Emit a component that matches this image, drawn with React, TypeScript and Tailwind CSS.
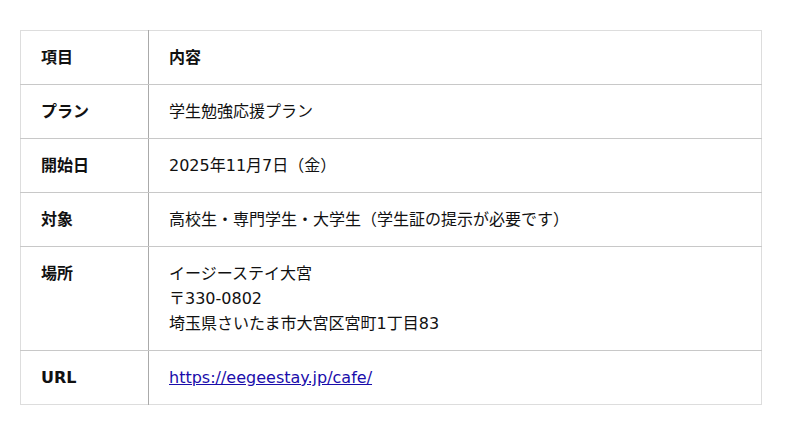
import React from 'react';

const rows: { label: string; lines: React.ReactNode[] }[] = [
  { label: 'プラン', lines: ['学生勉強応援プラン'] },
  { label: '開始日', lines: ['2025年11月7日（金）'] },
  { label: '対象', lines: ['高校生・専門学生・大学生（学生証の提示が必要です）'] },
  { label: '場所', lines: ['イージーステイ大宮', '〒330-0802', '埼玉県さいたま市大宮区宮町1丁目83'] },
  {
    label: 'URL',
    lines: [
      <a key="u" href="https://eegeestay.jp/cafe/" className="text-[#1a0dab] underline">
        https://eegeestay.jp/cafe/
      </a>,
    ],
  },
];

export default function App() {
  return (
    <div
      className="bg-white px-5 pt-[30px] pb-[30px] text-[16px] leading-[25px] text-[#111]"
      style={{ fontFamily: '"DejaVu Sans", "Noto Sans CJK JP", sans-serif' }}
    >
      <table className="w-[742px] border-collapse border border-[#ddd]">
        <thead>
          <tr>
            <th className="w-[128px] border-r border-b border-r-[#aaa] border-b-[#c8c8c8] px-5 py-[14px] text-left font-bold">項目</th>
            <th className="border-b border-b-[#c8c8c8] px-5 py-[14px] text-left font-bold">内容</th>
          </tr>
        </thead>
        <tbody>
          {rows.map((r, i) => (
            <tr key={r.label}>
              <th
                className={`border-r border-r-[#aaa] px-5 py-[14px] text-left align-top font-bold ${
                  i < rows.length - 1 ? 'border-b border-b-[#c8c8c8]' : ''
                }`}
              >
                {r.label}
              </th>
              <td
                className={`px-5 py-[14px] align-top ${i < rows.length - 1 ? 'border-b border-b-[#c8c8c8]' : ''}`}
              >
                {r.lines.map((l, j) => (
                  <div key={j}>{l}</div>
                ))}
              </td>
            </tr>
          ))}
        </tbody>
      </table>
    </div>
  );
}
